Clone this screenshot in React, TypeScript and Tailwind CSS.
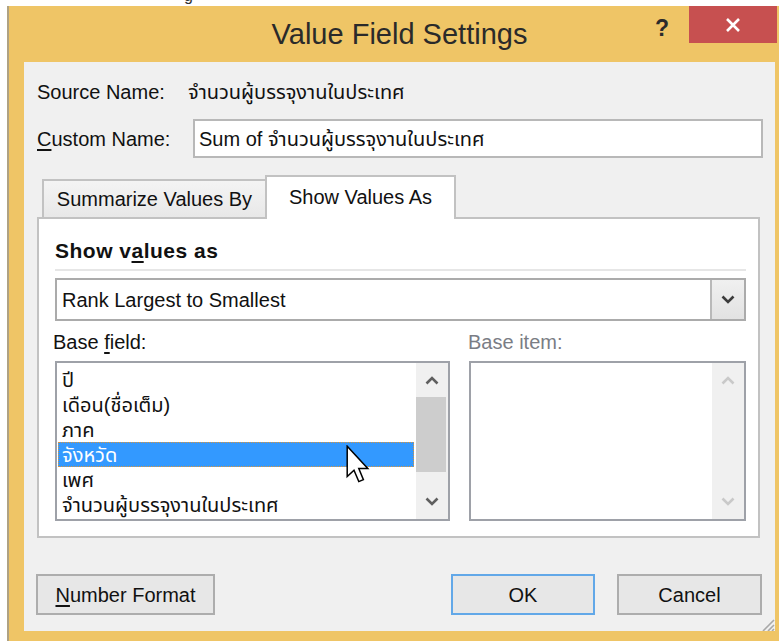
import React from "react";

const thaiName = "จำนวนผู้บรรจุงานในประเทศ";
const baseFields = ["ปี", "เดือน(ชื่อเต็ม)", "ภาค", "จังหวัด", "เพศ", thaiName];

function Chevron({ dir, color }: { dir: "up" | "down"; color: string }) {
  return (
    <svg width="14" height="9" viewBox="0 0 14 9">
      <path
        d={dir === "up" ? "M1.5 7.5 L7 2 L12.5 7.5" : "M1.5 1.5 L7 7 L12.5 1.5"}
        stroke={color}
        strokeWidth="2.6"
        fill="none"
      />
    </svg>
  );
}

function ScrollBar({ disabled }: { disabled?: boolean }) {
  const c = disabled ? "#C9C9C9" : "#5F5F5F";
  return (
    <div className="w-[32px] h-full bg-[#F0F0F0] flex flex-col">
      <div className="h-[34px] flex items-center justify-center">
        <Chevron dir="up" color={c} />
      </div>
      {!disabled && <div className="h-[75px] bg-[#CDCDCD] mr-[2px]" />}
      <div className="flex-1" />
      <div className="h-[36px] flex items-center justify-center">
        <Chevron dir="down" color={c} />
      </div>
    </div>
  );
}

function Cursor() {
  return (
    <svg width="24" height="38" viewBox="0 0 12 19" className="absolute left-[289px] top-[82px]">
      <path
        d="M0.6 0.6 V15.8 L4 12.6 L6.4 18.3 L8.7 17.3 L6.4 11.8 H10.9 Z"
        fill="#FFFFFF"
        stroke="#000000"
        strokeWidth="0.75"
        strokeLinejoin="miter"
      />
    </svg>
  );
}

export default function App() {
  return (
    <div className="w-[779px] h-[641px] overflow-hidden bg-white font-['Liberation_Sans','Noto_Sans_Thai','Noto_Sans','DejaVu_Sans',sans-serif] text-[20px] text-[#111]">
      {/* strip of the page behind the dialog */}
      <div className="h-[6px] overflow-hidden">
        <span className="block ml-[184px] -mt-[12px] text-[16px] leading-[16px] text-[#333]">g</span>
      </div>

      <div className="ml-[7px] w-[783px] h-[640px] bg-[#EFC566] border-l-2 border-l-[#AFA283]">
        {/* caption */}
        <div className="relative h-[56px] flex items-center justify-center">
          <span className="text-[29px] text-[#2A2A2A] leading-none">Value Field Settings</span>
          <span className="absolute left-[646px] top-[5px] text-[23px] font-bold text-[#2B2B2B]">?</span>
          <div className="absolute right-[13px] top-0 w-[88px] h-[37px] bg-[#C75050] flex items-center justify-center">
            <svg width="16" height="16" viewBox="0 0 16 16">
              <path d="M2 2 L14 14 M14 2 L2 14" stroke="#FFFFFF" strokeWidth="2.6" />
            </svg>
          </div>
        </div>

        {/* client area */}
        <div className="relative mx-[15px] h-[569px] bg-[#F0F0F0] flex flex-col">
          <div className="pl-[13px] pr-[12px] pt-[18px]">
            <div className="flex items-center h-[24px]">
              <span className="w-[151px] shrink-0">Source Name:</span>
              <span>{thaiName}</span>
            </div>
            <div className="mt-[15px] flex items-center h-[39px]">
              <span className="w-[156px] shrink-0">
                <span className="underline underline-offset-[3px]">C</span>ustom Name:
              </span>
              <div className="flex-1 h-full bg-white border-2 border-[#B8B8B8] flex items-center pl-[4px]">
                <span>Sum of {thaiName}</span>
              </div>
            </div>
          </div>

          {/* tabs */}
          <div className="ml-[13px] mr-[15px] mt-[17px]">
            <div className="relative z-10 flex items-end h-[42px] pl-[5px]">
              <div className="w-[225px] h-[38px] border-2 border-b-0 border-[#C2C2C2] bg-gradient-to-b from-[#F4F4F4] to-[#E8E8E8] flex items-center justify-center">
                Summarize Values By
              </div>
              <div className="w-[191px] h-[44px] -mb-[2px] -ml-[2px] border-2 border-b-0 border-[#C2C2C2] bg-white flex items-center justify-center pb-[2px]">
                Show Values As
              </div>
            </div>

            <div className="h-[321px] border-2 border-[#C2C2C2] bg-white pl-[16px] pr-[12px] pt-[19px]">
              <div className="h-[26px] flex items-center font-bold text-[21px] tracking-[0.5px]">
                <span>
                  Show v<span className="underline underline-offset-[3px]">a</span>lues as
                </span>
              </div>
              <div className="mt-[5px] h-[2px] bg-[#E6E6E6]" />
              <div className="mt-[7px] h-[43px] border-2 border-[#ABABAB] flex">
                <div className="flex-1 flex items-center pl-[5px]">Rank Largest to Smallest</div>
                <div className="w-[34px] h-full border-l-2 border-[#B9B9B9] bg-gradient-to-b from-[#F0F0F0] to-[#E2E2E2] flex items-center justify-center">
                  <Chevron dir="down" color="#3C3C3C" />
                </div>
              </div>

              <div className="grid grid-cols-[395px_277px] gap-x-[19px]">
                <div className="mt-[9px] h-[24px] -ml-[2px] flex items-center">
                  <span>
                    Base <span className="underline underline-offset-[3px]">f</span>ield:
                  </span>
                </div>
                <div className="mt-[9px] h-[24px] -ml-[1px] flex items-center text-[#7A7D85]">Base item:</div>

                <div className="relative mt-[7px] h-[160px] border-2 border-[#9EA1A8] bg-white flex">
                  <div className="flex-1 pt-[4px] pl-[1px] pr-[2px]">
                    {baseFields.map((f) =>
                      f === "จังหวัด" ? (
                        <div
                          key={f}
                          className="h-[25px] flex items-center pl-[3px] bg-[#3399FF] text-white border border-dotted border-[#D9953D] leading-none"
                        >
                          {f}
                        </div>
                      ) : (
                        <div key={f} className="h-[25px] flex items-center pl-[4px] leading-none">
                          {f}
                        </div>
                      )
                    )}
                  </div>
                  <ScrollBar />
                  <Cursor />
                </div>

                <div className="mt-[7px] h-[160px] border-2 border-[#9EA1A8] bg-white flex justify-end">
                  <ScrollBar disabled />
                </div>
              </div>
            </div>
          </div>

          {/* buttons */}
          <div className="mt-[36px] pl-[12px] pr-[13px] flex items-center">
            <button className="w-[179px] h-[41px] border-2 border-[#ADADAD] bg-[#E7E7E7] text-[20px]">
              <span className="underline underline-offset-[3px]">N</span>umber Format
            </button>
            <div className="flex-1" />
            <button className="w-[144px] h-[41px] border-2 border-[#62A8E8] bg-[#E7E7E7] text-[20px]">OK</button>
            <button className="ml-[22px] w-[145px] h-[41px] border-2 border-[#ADADAD] bg-[#E7E7E7] text-[20px]">Cancel</button>
          </div>

          {/* size grip */}
          <svg width="16" height="14" viewBox="0 0 16 14" className="absolute right-[0px] bottom-0">
            <path d="M15 3 L4 14 M15 8 L9 14 M15 12 L13 14" stroke="#A8A8A8" strokeWidth="1.6" />
          </svg>
        </div>
      </div>
    </div>
  );
}
